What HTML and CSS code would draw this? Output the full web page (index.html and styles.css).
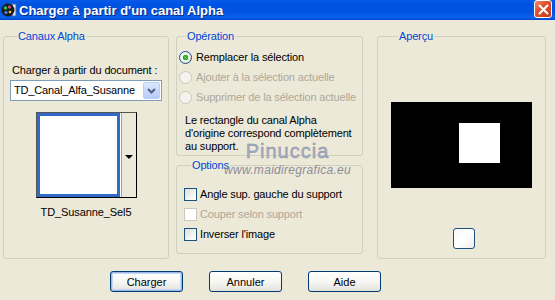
FILE: index.html
```html
<!DOCTYPE html>
<html lang="fr">

<head>
    <meta charset="UTF-8">
    <title>Charger à partir d'un canal Alpha</title>
    <link rel="stylesheet" href="styles.css">
</head>

<body>
    <div class="window">
        <div class="titlebar">
            <svg class="titlebar__icon" width="16" height="16" viewBox="0 0 16 16">
                <rect x="11" y="2" width="4" height="12" fill="#dfe8f8" stroke="#3a66b8" stroke-width="1"/>
                <circle cx="7" cy="8" r="6.5" fill="#1b1b1b"/>
                <circle cx="4.5" cy="6" r="1.8" fill="#2fbf5c"/>
                <circle cx="8.5" cy="5" r="1.5" fill="#e04aa0"/>
                <circle cx="5" cy="10.5" r="1.5" fill="#3a8fe8"/>
                <circle cx="9" cy="10" r="1.3" fill="#e8c43a"/>
            </svg>
            <span class="titlebar__text">Charger à partir d'un canal Alpha</span>
            <div class="titlebar__close">
                <svg width="11" height="11" viewBox="0 0 11 11">
                    <path d="M1.5 1.5 L9.5 9.5 M9.5 1.5 L1.5 9.5" stroke="#fff" stroke-width="2" stroke-linecap="round"/>
                </svg>
            </div>
        </div>

        <div class="dialog">
            <fieldset class="group group--channels">
                <legend>Canaux Alpha</legend>
                <div class="field-label">Charger à partir du document :</div>
                <div class="select">
                    <span class="select__value">TD_Canal_Alfa_Susanne</span>
                    <span class="select__btn">
                        <svg width="9" height="6" viewBox="0 0 9 6">
                            <path d="M1 1 L4.5 4.5 L8 1" fill="none" stroke="#4d6185" stroke-width="2"/>
                        </svg>
                    </span>
                </div>
                <div class="thumb">
                    <div class="thumb__img"></div>
                    <div class="thumb__btn"><span class="thumb__arrow"></span></div>
                </div>
                <div class="thumb-name">TD_Susanne_Sel5</div>
            </fieldset>

            <div class="middle">
                <fieldset class="group group--operation">
                    <legend>Opération</legend>
                    <div class="row"><span class="radio radio--on"></span>Remplacer la sélection</div>
                    <div class="row row--off"><span class="radio"></span>Ajouter à la sélection actuelle</div>
                    <div class="row row--off"><span class="radio"></span>Supprimer de la sélection actuelle</div>
                    <p class="note">Le rectangle du canal Alpha d'origine correspond complètement au support.</p>
                </fieldset>

                <fieldset class="group group--options">
                    <legend>Options</legend>
                    <div class="row"><span class="check"></span>Angle sup. gauche du support</div>
                    <div class="row row--off"><span class="check"></span>Couper selon support</div>
                    <div class="row"><span class="check"></span>Inverser l'image</div>
                </fieldset>
            </div>

            <fieldset class="group group--preview">
                <legend>Aperçu</legend>
                <div class="preview">
                    <div class="preview__sel"></div>
                </div>
                <div class="preview-btn"></div>
            </fieldset>
        </div>

        <div class="buttons">
            <button class="btn btn--default">Charger</button>
            <button class="btn">Annuler</button>
            <button class="btn">Aide</button>
        </div>

        <div class="watermark">
            <div class="watermark__name">Pinuccia</div>
            <div class="watermark__url">www.maidiregrafica.eu</div>
        </div>
    </div>
</body>

</html>
```

FILE: styles.css
```css
* {
    margin: 0;
    padding: 0;
    box-sizing: border-box;
}

body {
    width: 555px;
    height: 300px;
    overflow: hidden;
    background-color: #ece9d8;
    font-family: "Liberation Sans", Arial, sans-serif;
    font-size: 11px;
    line-height: 13px;
    letter-spacing: -0.15px;
    color: #000;
}

.window {
    position: relative;
    height: 300px;
}

/* title bar */
.titlebar {
    display: flex;
    align-items: center;
    height: 20px;
    padding-left: 1px;
    background: linear-gradient(#0a5ce6 0%, #0054e3 15%, #0052df 60%, #0a62ee 85%, #0048cf 100%);
}

.titlebar__icon {
    flex: none;
}

.titlebar__text {
    margin-left: 2px;
    font-size: 13px;
    font-weight: bold;
    letter-spacing: 0;
    color: #fff;
    text-shadow: 1px 1px 0 #0a2a8a;
}

.titlebar__close {
    display: flex;
    align-items: center;
    justify-content: center;
    flex: none;
    width: 18px;
    height: 18px;
    margin: -2px 3px 0 auto;
    border: 1px solid #fff;
    border-radius: 3px;
    background: linear-gradient(135deg, #ef8a6c 0%, #e0522f 40%, #c63a18 100%);
}

/* dialog body */
.dialog {
    display: flex;
    padding: 10px 0 0 3px;
}

.group {
    border: 1px solid #d0d0bf;
    border-radius: 3px;
}

.group legend {
    margin-left: 7px;
    padding: 0 1px;
    color: #0046d5;
}

.group--channels {
    width: 166px;
    height: 229px;
    padding: 0 6px;
}

.middle {
    display: flex;
    flex-direction: column;
    gap: 3px;
    margin-left: 7px;
}

.group--operation {
    width: 187px;
    height: 126px;
    padding: 0 2px;
}

.group--options {
    width: 187px;
    height: 95px;
    padding: 0 7px;
}

.group--preview {
    width: 169px;
    height: 229px;
    margin-left: 14px;
    padding: 0 13px;
}

/* canaux alpha */
.field-label {
    margin: 21px 0 0 2px;
    white-space: nowrap;
}

.select {
    display: flex;
    align-items: center;
    width: 152px;
    height: 21px;
    margin-top: 3px;
    padding: 0 1px 0 3px;
    border: 1px solid #7f9db9;
    background-color: #fff;
}

.select__value {
    flex: 1;
    white-space: nowrap;
}

.select__btn {
    display: flex;
    align-items: center;
    justify-content: center;
    width: 17px;
    height: 17px;
    border: 1px solid #b9cdf5;
    border-radius: 2px;
    background: linear-gradient(#dce8fd, #b7cbf8);
}

.thumb {
    display: flex;
    width: 101px;
    height: 86px;
    margin: 11px 0 0 26px;
    border: 1px solid #000;
    border-top-color: #555;
    border-left-color: #555;
    background-color: #fff;
}

.thumb__img {
    width: 83px;
    border: 3px solid #316ac5;
    background-color: #fff;
}

.thumb__btn {
    display: flex;
    align-items: center;
    justify-content: center;
    flex: 1;
    margin-left: 1px;
    border-left: 1px solid #a0a0a0;
    background-color: #ece9d8;
}

.thumb__arrow {
    width: 0;
    height: 0;
    margin-top: 3px;
    border-left: 4px solid transparent;
    border-right: 4px solid transparent;
    border-top: 4px solid #000;
}

.thumb-name {
    margin-top: 8px;
    text-align: center;
    letter-spacing: -0.1px;
}

/* rows */
.row {
    display: flex;
    align-items: center;
    height: 20px;
    white-space: nowrap;
}

.row--off {
    color: #aca899;
}

.group--operation .row:first-of-type {
    margin-top: 4px;
}

.group--options .row:first-of-type {
    margin-top: 12px;
}

.radio {
    flex: none;
    width: 13px;
    height: 13px;
    margin-right: 4px;
    border: 1px solid #1c5180;
    border-radius: 50%;
    background: radial-gradient(circle at 35% 35%, #fff 0%, #f2f1ea 50%, #d6d5cc 100%);
}

.row--off .radio {
    border-color: #cac8bb;
    background: #f4f3ee;
}

.radio--on {
    background: radial-gradient(circle, #55d04a 0, #21a121 2.5px, transparent 3px),
        radial-gradient(circle at 35% 35%, #fff 0%, #f2f1ea 50%, #d6d5cc 100%);
}

.check {
    flex: none;
    width: 13px;
    height: 13px;
    margin-right: 3px;
    border: 1px solid #1c5180;
    background: linear-gradient(135deg, #dcdcd7 0%, #f8f8f6 70%, #fff 100%);
}

.row--off .check {
    border-color: #cac8bb;
    background: #fff;
}

.note {
    width: 170px;
    margin: 7px 0 0 6px;
}

/* aperçu */
.preview {
    display: flex;
    justify-content: flex-end;
    width: 141px;
    height: 86px;
    margin-top: 59px;
    padding: 21px 32px 0 0;
    background-color: #000;
}

.preview__sel {
    width: 41px;
    height: 40px;
    background-color: #fff;
}

.preview-btn {
    width: 22px;
    height: 21px;
    margin: 40px 0 0 62px;
    border: 1px solid #1c5180;
    border-radius: 3px;
    background: linear-gradient(135deg, #f7f7f5 0%, #fff 50%, #eeede8 100%);
}

/* buttons */
.buttons {
    display: flex;
    gap: 26px;
    padding: 12px 0 0 110px;
}

.btn {
    width: 73px;
    height: 21px;
    border: 1px solid #003c74;
    border-radius: 3px;
    background: linear-gradient(#fff 0%, #f4f4f0 60%, #e3e2da 100%);
    font-family: inherit;
    font-size: 11px;
    color: #000;
}

.btn--default {
    box-shadow: inset 0 0 0 1px #9bb7e8, inset 0 0 0 2px #c7d8f6;
}

/* watermark */
.watermark {
    position: absolute;
    left: 224px;
    top: 141px;
    text-align: center;
    pointer-events: none;
}

.watermark__name {
    font-size: 20px;
    line-height: 21px;
    letter-spacing: 1px;
    color: #a5afc6;
    -webkit-text-stroke: 0.4px #7f8aa3;
}

.watermark__url {
    margin-top: 2px;
    font-size: 12px;
    font-style: italic;
    color: #8c8c98;
    letter-spacing: 0.3px;
}
```
